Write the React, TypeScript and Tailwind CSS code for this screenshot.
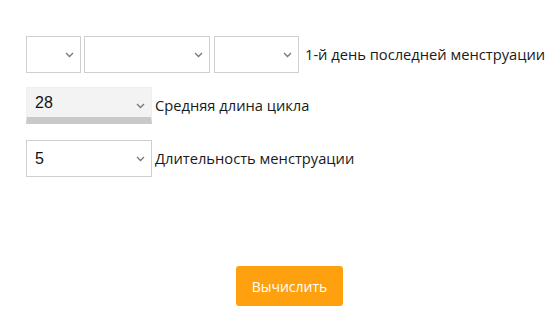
import { ChevronDown } from "lucide-react";

const Chevron = () => (
  <svg
    className="pointer-events-none absolute right-[7px] top-1/2 -translate-y-1/2"
    width="9"
    height="6"
    viewBox="0 0 9 6"
    fill="none"
  >
    <path d="M1 1l3.5 3.5L8 1" stroke="#777" strokeWidth="1.3" />
  </svg>
);

type SelectProps = {
  width: string;
  value?: string;
  options: string[];
  gray?: boolean;
};

const Select = ({ width, value, options, gray }: SelectProps) => (
  <div className={`relative ${width} shrink-0`}>
    <select
      defaultValue={value ?? ""}
      className={`h-[37px] w-full appearance-none border pl-2 pr-5 text-[16px] text-[#111] outline-none font-['Liberation_Sans',Arial,sans-serif] ${
        gray
          ? "border-[#efefef] border-b-[7px] border-b-[#c9c9c9] bg-[#f3f3f3] h-[37px]"
          : "border-[#cfcfcf] bg-white"
      }`}
    >
      <option value=""></option>
      {options.map((o) => (
        <option key={o} value={o}>
          {o}
        </option>
      ))}
    </select>
    <Chevron />
  </div>
);

const days = Array.from({ length: 31 }, (_, i) => String(i + 1));
const months = [
  "январь",
  "февраль",
  "март",
  "апрель",
  "май",
  "июнь",
  "июль",
  "август",
  "сентябрь",
  "октябрь",
  "ноябрь",
  "декабрь",
];
const years = ["2023", "2024", "2025"];
const cycle = Array.from({ length: 25 }, (_, i) => String(i + 20));
const period = Array.from({ length: 10 }, (_, i) => String(i + 1));

export default function App() {
  void ChevronDown;
  return (
    <div className="min-h-[333px] w-[549px] bg-white pl-[26px] pt-[36px] font-['Open_Sans','Noto_Sans',sans-serif] text-[14.7px] text-[#1a1a1a]">
      {/* date row */}
      <div className="flex items-center">
        <Select width="w-[55px]" options={days} />
        <div className="ml-[3px]" />
        <Select width="w-[126px]" options={months} />
        <div className="ml-[4px]" />
        <Select width="w-[85px]" options={years} />
        <span className="ml-[6px] whitespace-nowrap">1-й день последней менструации</span>
      </div>

      {/* cycle length */}
      <div className="mt-[14px] flex items-center">
        <Select width="w-[126px]" value="28" options={cycle} gray />
        <span className="ml-[3px]">Средняя длина цикла</span>
      </div>

      {/* period length */}
      <div className="mt-[16px] flex items-center">
        <Select width="w-[126px]" value="5" options={period} />
        <span className="ml-[3px]">Длительность менструации</span>
      </div>

      <div className="mt-[89px] flex pl-[210px]">
        <button className="h-[40px] w-[107px] rounded-[3px] bg-[#ffa00f] text-[14px] text-white">
          Вычислить
        </button>
      </div>
    </div>
  );
}
